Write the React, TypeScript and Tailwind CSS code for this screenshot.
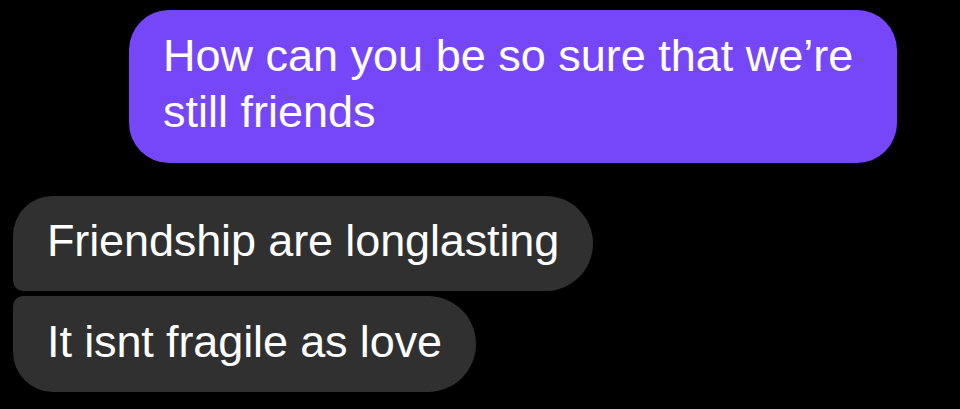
export default function App() {
  const font = { fontFamily: '"Liberation Sans", Arial, sans-serif' };
  return (
    <div className="w-[960px] h-[409px] bg-black overflow-hidden" style={font}>
      <div className="flex flex-col pt-[10px]">
        <div className="flex justify-end pr-[63px]">
          <div className="w-[768px] bg-[#7647f9] text-white rounded-[40px] pl-[34px] pr-[34px] pt-[18px] pb-[23px] text-[45px] leading-[56px]">
            How can you be so sure that we’re still friends
          </div>
        </div>
        <div className="flex flex-col items-start pl-[13px] mt-[33px] gap-[5px]">
          <div className="bg-[#303030] text-white rounded-tl-[40px] rounded-bl-[10px] rounded-r-[48px] pl-[34px] pr-[34px] pt-[17px] pb-[22px] text-[45px] leading-[56px] tracking-[-0.12px] whitespace-nowrap">
            Friendship are longlasting
          </div>
          <div className="bg-[#303030] text-white rounded-tl-[10px] rounded-bl-[40px] rounded-r-[48px] pl-[34px] pr-[34px] pt-[18px] pb-[22px] text-[45px] leading-[56px] tracking-[-0.12px] whitespace-nowrap">
            It isnt fragile as love
          </div>
        </div>
      </div>
    </div>
  );
}
